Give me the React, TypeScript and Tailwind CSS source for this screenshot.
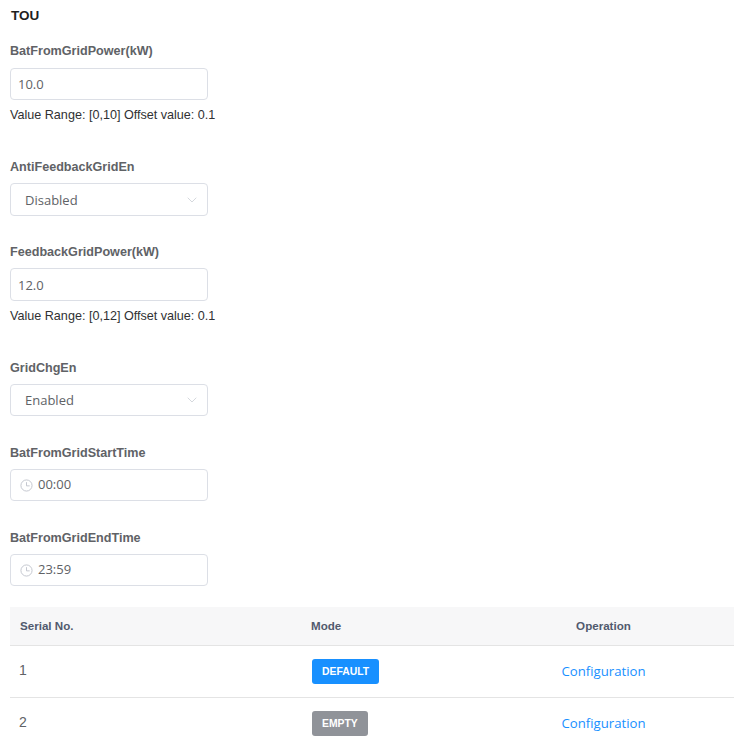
import React from 'react';
import { ChevronDown } from 'lucide-react';

const sans = "font-['Liberation_Sans',Arial,sans-serif]";

const Label = ({ text }: { text: string }) => (
  <div className={`h-[18px] text-[12.6px] leading-[18px] font-bold text-[#606266] ${sans}`}>{text}</div>
);

const Box = ({ children, tall }: { children: React.ReactNode; tall?: boolean }) => (
  <div
    className={`flex w-[198px] items-center rounded border border-[#dcdfe6] bg-white text-[13px] text-[#606266] font-['Open_Sans',sans-serif] ${
      tall ? 'h-[33px]' : 'h-[32px]'
    }`}
  >
    {children}
  </div>
);

const Clock = () => (
  <svg width="13" height="13" viewBox="0 0 14 14" fill="none" stroke="#c0c4cc" strokeWidth="1" className="ml-[9px] mr-[5px]">
    <circle cx="7" cy="7" r="6" />
    <path d="M7 3.4V7.4H10.4" />
  </svg>
);

const NumberField = ({ label, value, help, gap }: { label: string; value: string; help: string; gap: string }) => (
  <div>
    <Label text={label} />
    <div className={gap}>
      <Box tall={gap === 'mt-[7px]'}>
        <span className="pl-[7px] pt-[2px]">{value}</span>
      </Box>
    </div>
    <div className={`mt-[7px] h-[16px] text-[12.6px] leading-[16px] text-[#303133] ${sans}`}>{help}</div>
  </div>
);

const SelectField = ({ label, value, tall }: { label: string; value: string; tall?: boolean }) => (
  <div>
    <Label text={label} />
    <div className="mt-[7px]">
      <Box tall={tall}>
        <span className="flex-1 pl-[14px] pt-[2px]">{value}</span>
        <ChevronDown size={16} strokeWidth={1} className="mr-[7px] text-[#c0c4cc]" />
      </Box>
    </div>
  </div>
);

const TimeField = ({ label, value }: { label: string; value: string }) => (
  <div>
    <Label text={label} />
    <div className="mt-[7px]">
      <Box>
        <Clock />
        <span>{value}</span>
      </Box>
    </div>
  </div>
);

const rows = [
  { no: '1', mode: 'DEFAULT', color: 'bg-[#1890ff]' },
  { no: '2', mode: 'EMPTY', color: 'bg-[#909399]' },
];

export default function App() {
  return (
    <div className="h-[744px] w-[734px] overflow-hidden bg-white pl-[10px]">
      <div className={`h-[42px] pl-[1px] pt-[8px] text-[13.5px] leading-[16px] font-bold text-[#1f1f1f] ${sans}`}>TOU</div>

      <div className="flex flex-col">
        <NumberField label="BatFromGridPower(kW)" value="10.0" help="Value Range: [0,10] Offset value: 0.1" gap="mt-[8px]" />
        <div className="mt-[35px]">
          <SelectField label="AntiFeedbackGridEn" value="Disabled" tall />
        </div>
        <div className="mt-[27px]">
          <NumberField label="FeedbackGridPower(kW)" value="12.0" help="Value Range: [0,12] Offset value: 0.1" gap="mt-[7px]" />
        </div>
        <div className="mt-[35px]">
          <SelectField label="GridChgEn" value="Enabled" />
        </div>
        <div className="mt-[28px]">
          <TimeField label="BatFromGridStartTime" value="00:00" />
        </div>
        <div className="mt-[28px]">
          <TimeField label="BatFromGridEndTime" value="23:59" />
        </div>
      </div>

      <div className="mt-[21px]">
        <div className={`flex h-[39px] items-center border-b border-[#e4e4e4] bg-[#f7f7f8] text-[11.6px] font-bold text-[#515a6e] ${sans}`}>
          <div className="w-[301px] pl-[10px]">Serial No.</div>
          <div className="w-[190px]">Mode</div>
          <div className="w-[205px] text-center">Operation</div>
        </div>
        {rows.map((row) => (
          <div key={row.no} className="flex h-[52px] items-center border-b border-[#e4e4e4]">
            <div className={`w-[301px] pb-[2px] pl-[9px] text-[14px] text-[#606266] ${sans}`}>{row.no}</div>
            <div className="w-[190px] pb-[2px] pl-[1px]">
              <span className={`inline-block h-[25px] rounded-[3px] px-[10px] text-[10.4px] leading-[25px] font-bold text-white ${row.color} ${sans}`}>
                {row.mode}
              </span>
            </div>
            <div className="w-[205px] text-center text-[13.2px] text-[#1890ff] font-['Open_Sans',sans-serif]">Configuration</div>
          </div>
        ))}
      </div>
    </div>
  );
}
